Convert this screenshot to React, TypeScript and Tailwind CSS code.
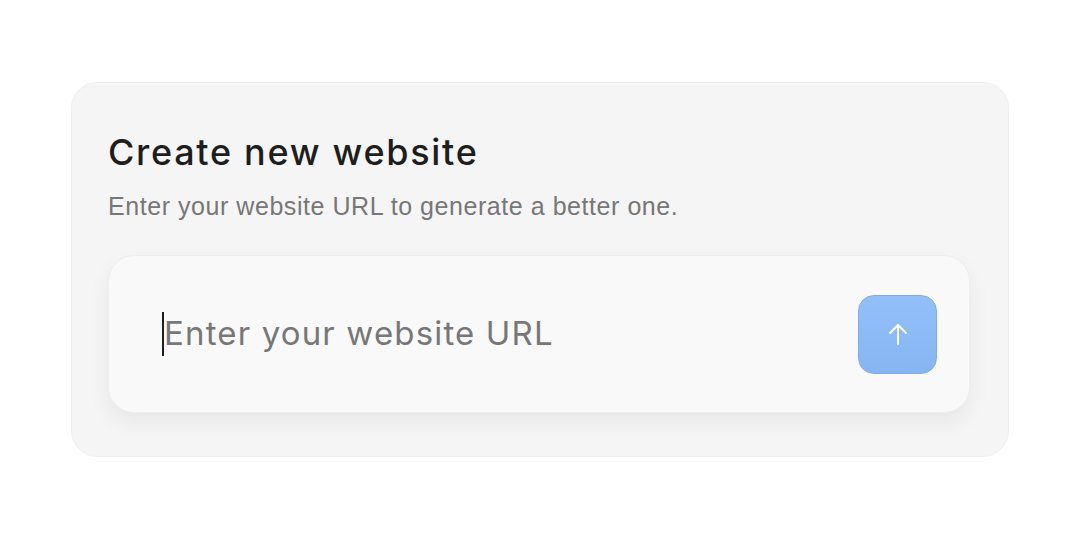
import React from 'react'

const ArrowUp = () => (
  <svg width="20" height="22" viewBox="0 0 20 22" fill="none" stroke="white" strokeWidth="2" strokeLinecap="round" strokeLinejoin="round">
    <path d="M10 21V2" />
    <path d="M2 10l8-8 8 8" />
  </svg>
)

const App: React.FC = () => {
  return (
    <div className="w-[1080px] h-[540px] bg-white pt-[82px] pl-[71px] font-['Inter',sans-serif]">
      <div className="w-[938px] h-[375px] rounded-[26px] bg-[#f5f5f5] border border-[#efefef] px-[36px] pt-[48px]">
        <h1 className="text-[36px] leading-[42px] text-[#1e1e1e] tracking-[0.047em] font-medium">Create new website</h1>
        <p className="mt-[18px] text-[25px] leading-[30px] text-[#777777] font-['Liberation_Sans',sans-serif] tracking-[0.022em]">Enter your website URL to generate a better one.</p>
        <div className="mt-[34px] h-[158px] w-[862px] rounded-[26px] bg-[#f9f9f9] border border-[#eeeeee] shadow-[0_10px_22px_rgba(0,0,0,0.06)] flex items-center pl-[53px] pr-[32px]">
          <div className="flex-1 flex items-center">
            <span className="w-[2px] h-[44px] bg-[#1e1e1e]" />
            <span className="text-[33px] text-[#777777] tracking-[0.035em]">Enter your website URL</span>
          </div>
          <button className="w-[79px] h-[79px] rounded-[16px] bg-gradient-to-b from-[#93c0f9] to-[#86b5f3] border border-[#80acec] flex items-center justify-center">
            <ArrowUp />
          </button>
        </div>
      </div>
    </div>
  )
}

export default App
